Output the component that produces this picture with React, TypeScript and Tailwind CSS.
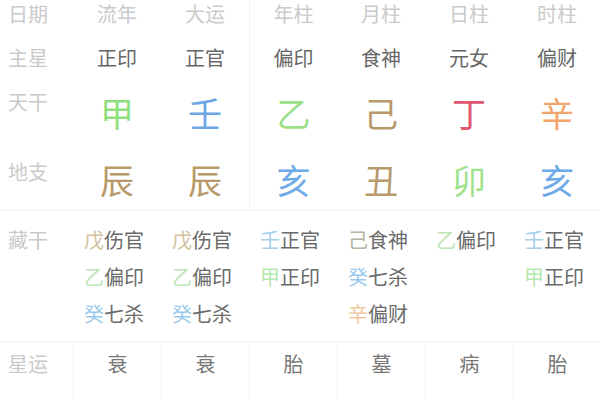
import React from "react";

const F = { fontFamily: '"Noto Sans CJK SC", "Noto Sans", sans-serif' };

type Cell = React.ReactNode;

function Row({
  label,
  cells,
  h,
  labelCls,
  cellCls,
  allBorders,
  topBorderCol = true,
}: {
  label: string;
  cells: Cell[];
  h: string;
  labelCls: string;
  cellCls: string;
  allBorders?: boolean;
  topBorderCol?: boolean;
}) {
  return (
    <div className={`flex ${h}`}>
      <div className={`w-[73px] shrink-0 pl-[8px] text-[20px] text-[#cacaca] ${labelCls}`}>{label}</div>
      {cells.map((c, i) => (
        <div
          key={i}
          className={`w-[88px] shrink-0 flex justify-center ${cellCls} ${
            allBorders ? "border-l border-[#f3f3f3]" : i === 2 && topBorderCol ? "border-l border-[#efefef]" : ""
          }`}
        >
          {c}
        </div>
      ))}
    </div>
  );
}

const Big = ({ ch, color }: { ch: string; color: string }) => (
  <span className="text-[34px] leading-[40px]" style={{ color }}>
    {ch}
  </span>
);

const Hid = ({ items }: { items: [string, string, string][] }) => (
  <div className="flex flex-col items-start pr-[6px]">
    {items.map(([g, c, rest], i) => (
      <div key={i} className="h-[37px] leading-[37px] text-[20px] text-[#6a6a6a]">
        <span style={{ color: c }}>{g}</span>
        {rest}
      </div>
    ))}
  </div>
);

export default function App() {
  const WU = "#d2c09a";
  const YI = "#bde5b8";
  const GUI = "#98c9ea";
  const REN = "#a6cfec";
  const JIA = "#b5e8ad";
  const JI = "#b3b3a0";
  const XIN = "#f0c9a2";
  return (
    <div className="w-[600px] h-[400px] overflow-hidden bg-white" style={F}>
      <Row
        label="日期"
        h="h-[36px]"
        labelCls="pt-[2px] leading-[24px]"
        cellCls="pt-[2px] text-[20px] leading-[24px] text-[#cacaca]"
        cells={["流年", "大运", "年柱", "月柱", "日柱", "时柱"]}
      />
      <Row
        label="主星"
        h="h-[44px]"
        labelCls="flex items-center"
        cellCls="items-center text-[20px] text-[#666]"
        cells={["正印", "正官", "偏印", "食神", "元女", "偏财"]}
      />
      <Row
        label="天干"
        h="h-[68px]"
        labelCls="pt-[10px] leading-[24px]"
        cellCls="pt-[13px]"
        cells={[
          <Big ch="甲" color="#8fe07c" />,
          <Big ch="壬" color="#6ea7e4" />,
          <Big ch="乙" color="#9de08a" />,
          <Big ch="己" color="#b8996c" />,
          <Big ch="丁" color="#df566f" />,
          <Big ch="辛" color="#f3a46d" />,
        ]}
      />
      <Row
        label="地支"
        h="h-[62px]"
        labelCls="pt-[12px] leading-[24px]"
        cellCls="pt-[12px]"
        cells={[
          <Big ch="辰" color="#b89a6b" />,
          <Big ch="辰" color="#b89a6b" />,
          <Big ch="亥" color="#6ea9e8" />,
          <Big ch="丑" color="#b89a6b" />,
          <Big ch="卯" color="#9ee28c" />,
          <Big ch="亥" color="#6ea9e8" />,
        ]}
      />
      <div className="border-t border-[#f1f1f1]">
        <Row
          label="藏干"
          h="h-[130px]"
          labelCls="pt-[10px] leading-[37px]"
          cellCls="pt-[10px]"
          topBorderCol={false}
          cells={[
            <Hid items={[["戊", WU, "伤官"], ["乙", YI, "偏印"], ["癸", GUI, "七杀"]]} />,
            <Hid items={[["戊", WU, "伤官"], ["乙", YI, "偏印"], ["癸", GUI, "七杀"]]} />,
            <Hid items={[["壬", REN, "正官"], ["甲", JIA, "正印"]]} />,
            <Hid items={[["己", JI, "食神"], ["癸", GUI, "七杀"], ["辛", XIN, "偏财"]]} />,
            <Hid items={[["乙", YI, "偏印"]]} />,
            <Hid items={[["壬", REN, "正官"], ["甲", JIA, "正印"]]} />,
          ]}
        />
      </div>
      <div className="border-t border-[#f1f1f1]">
        <Row
          label="星运"
          h="h-[44px]"
          labelCls="flex items-center"
          cellCls="items-center text-[20px] text-[#777]"
          allBorders
          cells={["衰", "衰", "胎", "墓", "病", "胎"]}
        />
        <Row
          label="自坐"
          h="h-[52px]"
          labelCls="pt-[14px] leading-[24px]"
          cellCls="pt-[14px] text-[20px] leading-[24px] text-[#777]"
          allBorders
          cells={["冠", "墓", "帝", "墓", "病", "沐浴"]}
        />
      </div>
    </div>
  );
}
